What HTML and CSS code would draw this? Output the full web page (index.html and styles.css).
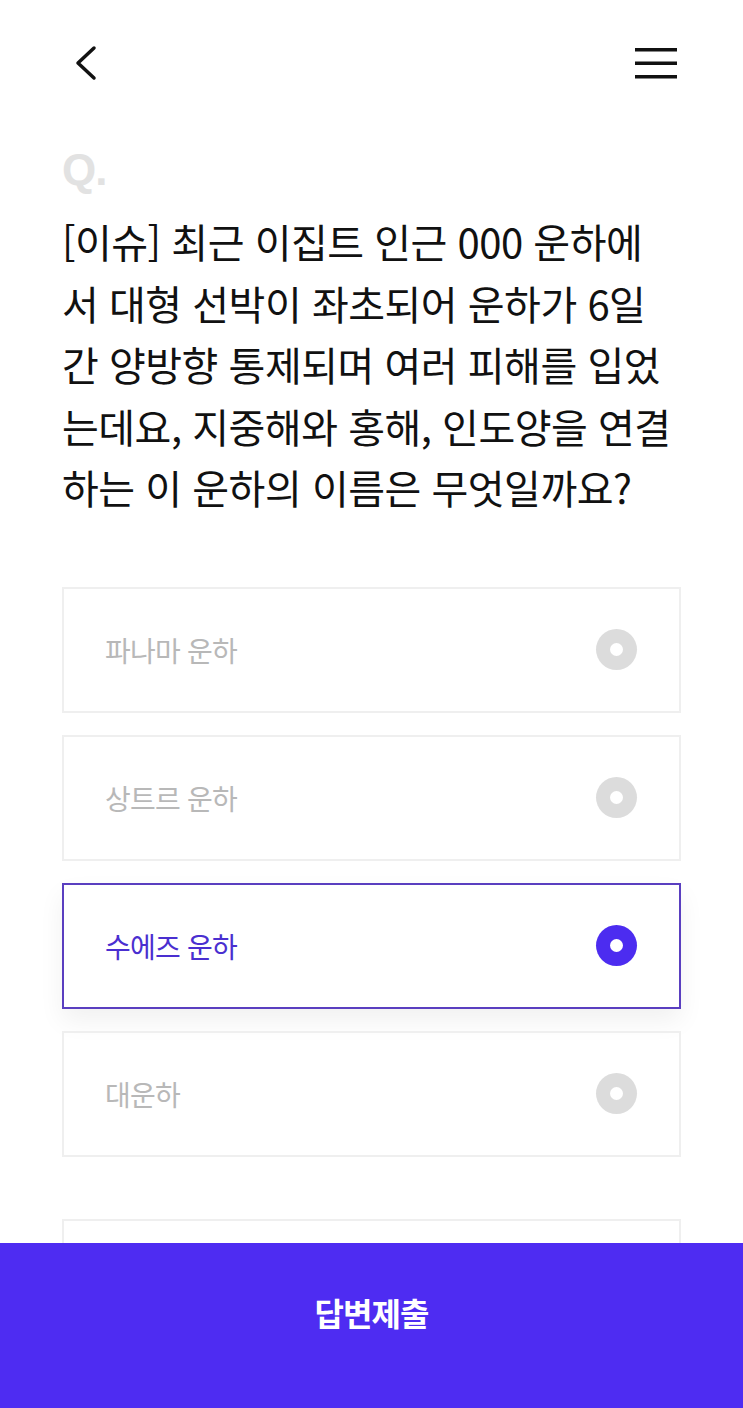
FILE: index.html
```html
<!DOCTYPE html>
<html lang="ko">
<head>
    <title>퀴즈</title>
    <meta name="viewport" content="width=device-width, initial-scale=1">
    <link rel="stylesheet" href="styles.css">
</head>
<body>

<div class="topbar">
    <svg class="back" width="40" height="40" viewBox="0 0 40 40">
        <polyline points="24,5 8,20 24,35" fill="none" stroke="#111" stroke-width="3.5" stroke-linecap="round" stroke-linejoin="round"/>
    </svg>
    <svg class="menu" width="42" height="32" viewBox="0 0 42 32">
        <rect x="0" y="1" width="42" height="3.5" fill="#111"/>
        <rect x="0" y="14.5" width="42" height="3.5" fill="#111"/>
        <rect x="0" y="28" width="42" height="3.5" fill="#111"/>
    </svg>
</div>

<div class="content">
    <div class="qmark">Q.</div>
    <p class="question">
        <span>[이슈] 최근 이집트 인근 000 운하에</span>
        <span>서 대형 선박이 좌초되어 운하가 6일</span>
        <span>간 양방향 통제되며 여러 피해를 입었</span>
        <span>는데요, 지중해와 홍해, 인도양을 연결</span>
        <span>하는 이 운하의 이름은 무엇일까요?</span>
    </p>

    <div class="options">
        <div class="option"><span>파나마 운하</span><i class="radio"></i></div>
        <div class="option"><span>상트르 운하</span><i class="radio"></i></div>
        <div class="option selected"><span>수에즈 운하</span><i class="radio"></i></div>
        <div class="option"><span>대운하</span><i class="radio"></i></div>
    </div>
    <div class="option more"></div>
</div>

<button class="submit">답변제출</button>

</body>
</html>
```

FILE: styles.css
```css
body { margin: 0; background: #fff; font-family: "Noto Sans CJK KR", "Noto Sans", sans-serif; color: #111; }
.topbar { display: flex; justify-content: space-between; align-items: center; padding: 43px 66px 0 70px; height: 40px; }
.content { padding: 0 62px 200px; }
.qmark { margin-top: 62px; font-family: "Liberation Sans", Arial, sans-serif; font-weight: bold; font-size: 44px; line-height: 50px; color: #e2e2e2; letter-spacing: -1px; }
.question { margin: 16px 0 0; font-size: 40px; line-height: 61.5px; letter-spacing: -0.5px; font-weight: 400; }
.question span { display: block; white-space: nowrap; }
.options { margin-top: 68px; display: flex; flex-direction: column; gap: 22px; }
.option { box-sizing: border-box; height: 126px; border: 2px solid #efefef; display: flex; align-items: center; justify-content: space-between; padding: 0 42px 0 41px; font-size: 28px; color: #b8b8b8; letter-spacing: -0.8px; }
.option.selected { border-color: #5a3fc0; color: #4a2fd0; box-shadow: 0 12px 24px rgba(0, 0, 0, 0.06); }
.option.more { margin-top: 62px; }
.radio { width: 41px; height: 41px; border-radius: 50%; background: #dcdcdc; position: relative; }
.radio::after { content: ""; position: absolute; left: 14px; top: 14px; width: 13px; height: 13px; border-radius: 50%; background: #fff; }
.selected .radio { background: #4c2cf0; }
.submit { position: fixed; left: 0; bottom: 0; width: 100%; height: 165px; border: none; background: #4e2cf2; color: #fff; font-family: "Noto Sans CJK KR", sans-serif; font-weight: bold; font-size: 32px; letter-spacing: -1px; padding-bottom: 28px; }
```
